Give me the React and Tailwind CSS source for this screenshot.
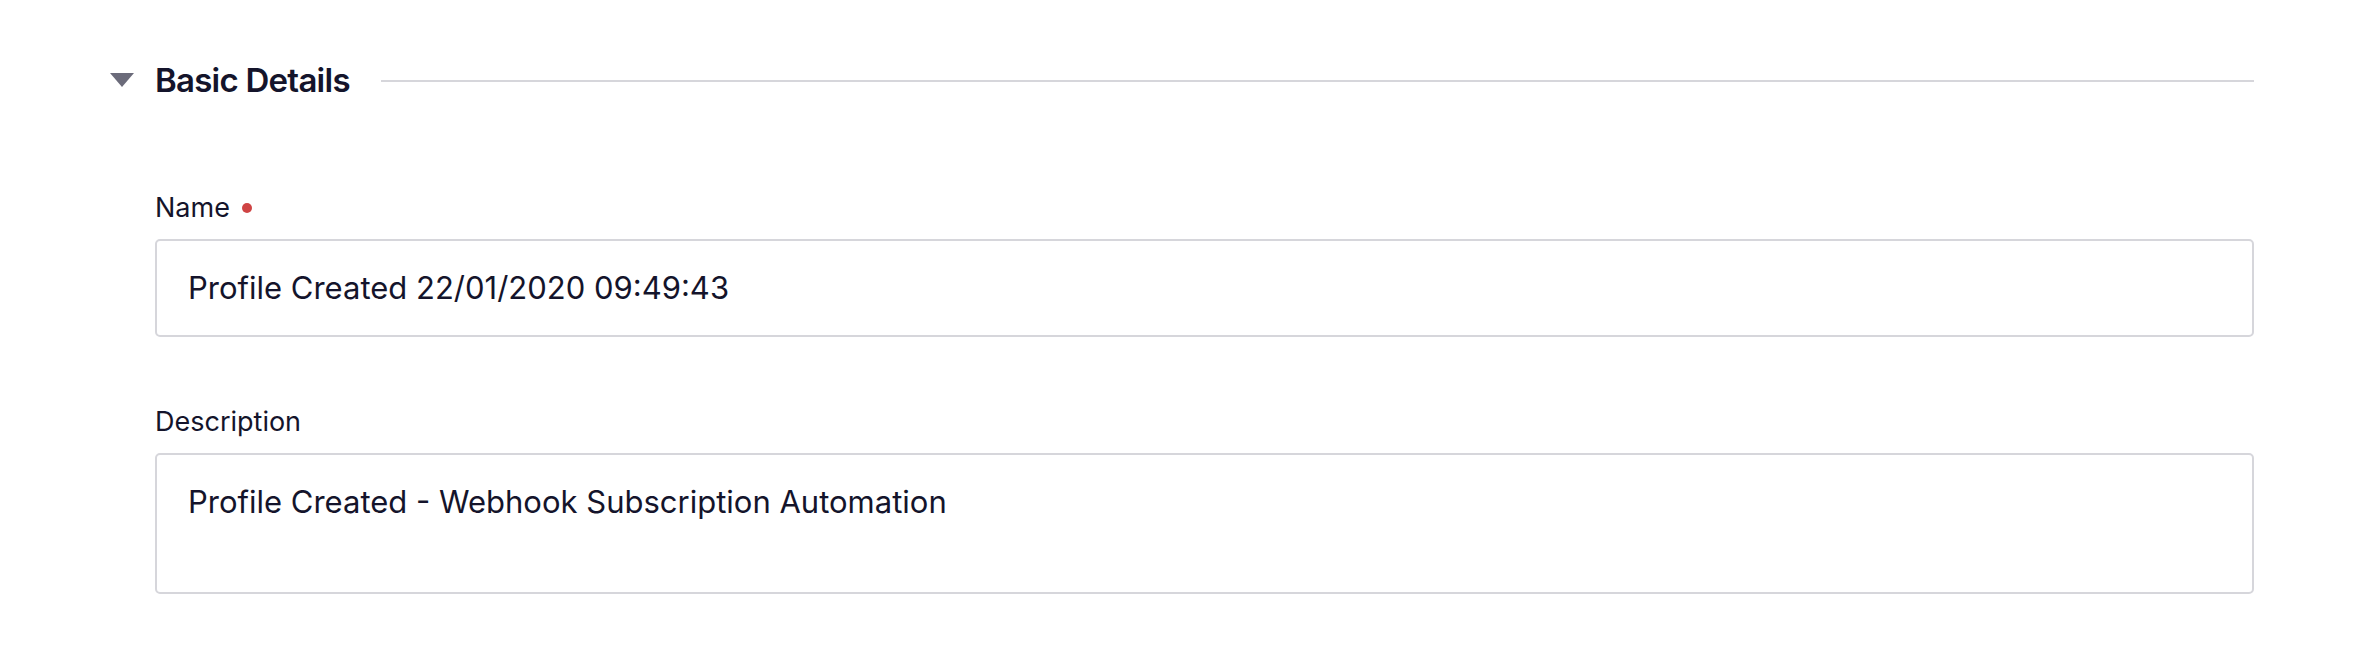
import React from 'react';

const Field = ({ label, required, value, tall }) => (
  <div className="flex flex-col">
    <div className="flex items-center h-[32px]">
      <span className="text-[27px] leading-[32px] text-[#14142b]">{label}</span>
      {required && <span className="ml-[12px] w-[10px] h-[10px] rounded-full bg-[#cf4444]" />}
    </div>
    <div
      className={
        tall
          ? 'mt-[15px] h-[141px] border-2 border-[#d6d6db] rounded-[5px] pl-[31px] pt-[29px]'
          : 'mt-[15px] h-[98px] border-2 border-[#d6d6db] rounded-[5px] pl-[31px] pt-[29px]'
      }
    >
      <span className="text-[31px] leading-[36px] text-[#14142b]">{value}</span>
    </div>
  </div>
);

const App = () => {
  return (
    <div
      className="w-[2366px] h-[654px] bg-white pt-[60px] pl-[110px] pr-[112px]"
      style={{ fontFamily: 'Inter, "Noto Sans", sans-serif' }}
    >
      {/* Section header */}
      <div className="flex items-center h-[40px]">
        <svg width="24" height="14" viewBox="0 0 24 14" className="shrink-0">
          <polygon points="0,0 24,0 12,14" fill="#6b6b7a" />
        </svg>
        <h2 className="ml-[21px] text-[33px] leading-[40px] font-semibold tracking-[-0.75px] text-[#14142b]">Basic Details</h2>
        <div className="flex-1 ml-[31px] h-[2px] bg-[#d6d6db] mt-[2px]" />
      </div>

      {/* Fields */}
      <div className="pl-[45px] mt-[92px] flex flex-col gap-[69px]">
        <Field label="Name" required value="Profile Created 22/01/2020 09:49:43" />
        <Field label="Description" value="Profile Created - Webhook Subscription Automation" tall />
      </div>
    </div>
  );
};

export default App;
